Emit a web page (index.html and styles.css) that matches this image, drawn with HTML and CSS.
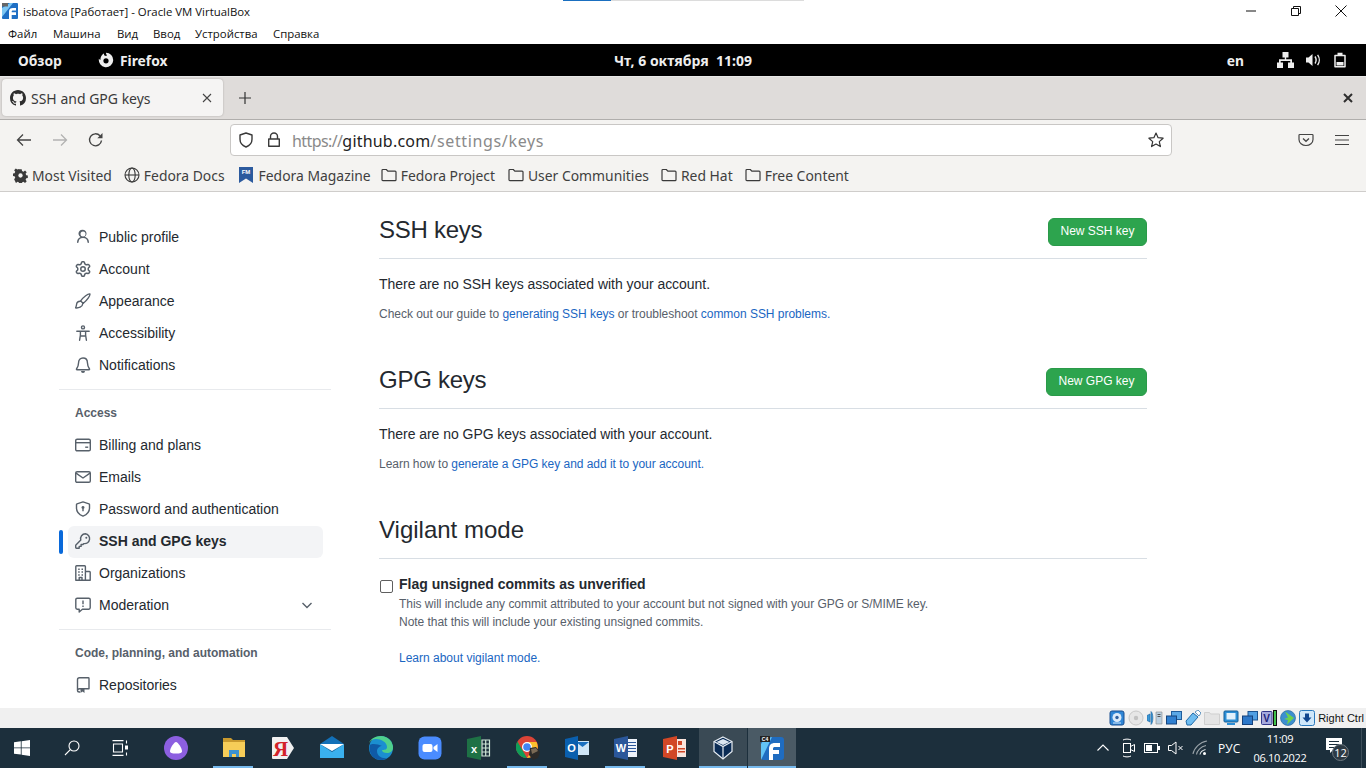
FILE: index.html
```html
<!DOCTYPE html>
<html lang="en">
<head>
<meta charset="utf-8">
<title>SSH and GPG keys</title>
<link rel="stylesheet" href="styles.css">
</head>
<body>
<svg class="defs" width="0" height="0" aria-hidden="true">
  <symbol id="i-gh" viewBox="0 0 16 16"><path fill="currentColor" d="M8 0c4.42 0 8 3.58 8 8a8.013 8.013 0 0 1-5.45 7.59c-.4.08-.55-.17-.55-.38 0-.27.01-1.13.01-2.2 0-.75-.25-1.23-.54-1.48 1.78-.2 3.65-.88 3.65-3.95 0-.88-.31-1.59-.82-2.15.08-.2.36-1.02-.08-2.12 0 0-.67-.22-2.2.82-.64-.18-1.32-.27-2-.27-.68 0-1.36.09-2 .27-1.53-1.03-2.2-.82-2.2-.82-.44 1.1-.16 1.92-.08 2.12-.51.56-.82 1.28-.82 2.15 0 3.06 1.86 3.75 3.64 3.95-.23.2-.44.55-.51 1.07-.46.21-1.61.55-2.33-.66-.15-.24-.6-.83-1.23-.82-.67.01-.27.38.01.53.34.19.73.9.82 1.13.16.45.68 1.31 2.69.94 0 .67.01 1.3.01 1.49 0 .21-.15.45-.55.38A7.995 7.995 0 0 1 0 8c0-4.42 3.58-8 8-8Z"/></symbol>
  <symbol id="i-person" viewBox="0 0 16 16"><path fill="currentColor" d="M10.561 8.073a6.005 6.005 0 0 1 3.432 5.142.75.75 0 1 1-1.498.07 4.5 4.5 0 0 0-8.99 0 .75.75 0 0 1-1.498-.07 6.004 6.004 0 0 1 3.431-5.142 3.999 3.999 0 1 1 4.123 0ZM10.5 5a2.5 2.5 0 1 0-5 0 2.5 2.5 0 0 0 5 0Z"/></symbol>
  <symbol id="i-gear" viewBox="0 0 16 16"><path fill="currentColor" d="M8 0a8.2 8.2 0 0 1 .701.031C9.444.095 9.99.645 10.16 1.29l.288 1.107c.018.066.079.158.212.224.231.114.454.243.668.386.123.082.233.09.299.071l1.103-.303c.644-.176 1.392.021 1.82.63.27.385.506.792.704 1.218.315.675.111 1.422-.364 1.891l-.814.806c-.049.048-.098.147-.088.294.016.257.016.515 0 .772-.01.147.038.246.088.294l.814.806c.475.469.679 1.216.364 1.891a7.977 7.977 0 0 1-.704 1.217c-.428.61-1.176.807-1.82.63l-1.102-.302c-.067-.019-.177-.011-.3.071a5.909 5.909 0 0 1-.668.386c-.133.066-.194.158-.211.224l-.29 1.106c-.168.646-.715 1.196-1.458 1.26a8.006 8.006 0 0 1-1.402 0c-.743-.064-1.289-.614-1.458-1.26l-.289-1.106c-.018-.066-.079-.158-.212-.224a5.738 5.738 0 0 1-.668-.386c-.123-.082-.233-.09-.299-.071l-1.103.303c-.644.176-1.392-.021-1.82-.63a8.12 8.12 0 0 1-.704-1.218c-.315-.675-.111-1.422.363-1.891l.815-.806c.05-.048.098-.147.088-.294a6.214 6.214 0 0 1 0-.772c.01-.147-.038-.246-.088-.294l-.815-.806C.635 6.045.431 5.298.746 4.623a7.92 7.92 0 0 1 .704-1.217c.428-.61 1.176-.807 1.82-.63l1.102.302c.067.019.177.011.3-.071.214-.143.437-.272.668-.386.133-.066.194-.158.211-.224l.29-1.106C6.009.645 6.556.095 7.299.03 7.53.01 7.764 0 8 0Zm-.571 1.525c-.036.003-.108.036-.137.146l-.289 1.105c-.147.561-.549.967-.998 1.189-.173.086-.34.183-.5.29-.417.278-.97.423-1.529.27l-1.103-.303c-.109-.03-.175.016-.195.045-.22.312-.412.644-.573.99-.014.031-.021.11.059.19l.815.806c.411.406.562.957.53 1.456a4.709 4.709 0 0 0 0 .582c.032.499-.119 1.05-.53 1.456l-.815.806c-.081.08-.073.159-.059.19.162.346.353.677.573.989.02.03.085.076.195.046l1.102-.303c.56-.153 1.113-.008 1.53.27.161.107.328.204.501.29.447.222.85.629.997 1.189l.289 1.105c.029.109.101.143.137.146a6.6 6.6 0 0 0 1.142 0c.036-.003.108-.036.137-.146l.289-1.105c.147-.561.549-.967.998-1.189.173-.086.34-.183.5-.29.417-.278.97-.423 1.529-.27l1.103.303c.109.029.175-.016.195-.045.22-.313.411-.644.573-.99.014-.031.021-.11-.059-.19l-.815-.806c-.411-.406-.562-.957-.53-1.456a4.709 4.709 0 0 0 0-.582c-.032-.499.119-1.05.53-1.456l.815-.806c.081-.08.073-.159.059-.19a6.464 6.464 0 0 0-.573-.989c-.02-.03-.085-.076-.195-.046l-1.102.303c-.56.153-1.113.008-1.53-.27a4.44 4.44 0 0 0-.501-.29c-.447-.222-.85-.629-.997-1.189l-.289-1.105c-.029-.11-.101-.143-.137-.146a6.6 6.6 0 0 0-1.142 0ZM11 8a3 3 0 1 1-6 0 3 3 0 0 1 6 0ZM9.5 8a1.5 1.5 0 1 0-3.001.001A1.5 1.5 0 0 0 9.5 8Z"/></symbol>
  <symbol id="i-brush" viewBox="0 0 16 16"><g fill="none" stroke="currentColor" stroke-width="1.4" stroke-linejoin="round" stroke-linecap="round"><path d="M14.900.900c-1.600-.5-6.600 3-9.200 7l2.400 2.400c4-2.700 7.300-7.800 6.800-9.400Z"/><path d="M5.500 8.300C3 8.200 1.700 9.700 1.500 11.700c-.1 1-.4 2.200-1 3.200 2.900.3 7-.6 7.300-4.400"/></g></symbol>
  <symbol id="i-access" viewBox="0 0 16 16"><g fill="none" stroke="currentColor" stroke-width="1.4" stroke-linecap="round"><circle cx="8" cy="2.400" r="1.500"/><path d="M1.800 6.200h12.400M5.400 6.500v3.700l-.8 5M10.600 6.500v3.700l.8 5M5.200 11h5.600"/></g></symbol>
  <symbol id="i-bell" viewBox="0 0 16 16"><g fill="none" stroke="currentColor" stroke-width="1.4" stroke-linejoin="round"><path d="M8 1C5.300 1 3.600 3 3.600 5.600c0 3.200-1.100 4.900-2.100 6.400-.2.400 0 .7.400.7h12.200c.4 0 .6-.3.400-.7-1-1.500-2.100-3.200-2.100-6.400C12.400 3 10.700 1 8 1Z"/></g><path fill="currentColor" d="M6 14h4a2 2 0 0 1-4 0Z"/></symbol>
  <symbol id="i-card" viewBox="0 0 16 16"><g fill="none" stroke="currentColor" stroke-width="1.4"><rect x=".7" y="2.200" width="14.600" height="11.600" rx="1.400"/><path d="M.7 5.700h14.600"/></g><path fill="currentColor" d="M10.200 9.500h3v1.400h-3z"/></symbol>
  <symbol id="i-mail" viewBox="0 0 16 16"><g fill="none" stroke="currentColor" stroke-width="1.4" stroke-linejoin="round"><rect x=".7" y="2.700" width="14.600" height="10.600" rx="1.400"/><path d="M1 4.200 8 9l7-4.800"/></g></symbol>
  <symbol id="i-shield" viewBox="0 0 16 16"><path fill="none" stroke="currentColor" stroke-width="1.4" stroke-linejoin="round" d="M8 .9 2 2.800c-.3.100-.5.400-.5.700V7c0 4 2.600 6.700 6.500 8.100 3.900-1.400 6.500-4.100 6.500-8.100V3.500c0-.3-.2-.6-.5-.7Z"/><path fill="currentColor" d="M9.500 6.500a1.500 1.500 0 0 1-.8 1.300v2.400H7.300V7.800a1.500 1.500 0 1 1 2.200-1.300Z"/></symbol>
  <symbol id="i-key" viewBox="0 0 16 16"><g fill="none" stroke="currentColor" stroke-width="1.4" stroke-linejoin="round"><path d="M10.400.8a4.800 4.800 0 0 0-4.600 6.200L.9 11.900c-.1.100-.2.300-.2.500v2.200c0 .4.300.7.700.7h2.800v-1.900h1.900v-1.900h1.900l.9-.9A4.800 4.800 0 1 0 10.400.8Z"/></g><circle fill="currentColor" cx="11.300" cy="4.700" r="1"/></symbol>
  <symbol id="i-org" viewBox="0 0 16 16"><g fill="none" stroke="currentColor" stroke-width="1.400" stroke-linejoin="round"><path d="M.8 15.200V1.600c0-.5.300-.8.800-.8h8c.5 0 .8.300.8.800v13.600zM10.400 6.500h4c.5 0 .8.300.8.800v7.900h-4.800M4.200 15.200v-2.700h2.800v2.700"/></g><path fill="currentColor" d="M3.200 3.400h1.500v1.500H3.200zM6.500 3.400H8v1.500H6.500zM3.200 6.300h1.500v1.500H3.200zM6.500 6.300H8v1.500H6.500zM3.200 9.200h1.500v1.500H3.200zM6.500 9.200H8v1.500H6.500z"/></symbol>
  <symbol id="i-report" viewBox="0 0 16 16"><path fill="none" stroke="currentColor" stroke-width="1.4" stroke-linejoin="round" d="M2.200 1.200h11.600c.8 0 1.400.6 1.400 1.400v8.200c0 .8-.6 1.400-1.400 1.400H7.400l-3.200 2.800V12.200h-2c-.8 0-1.400-.6-1.400-1.400V2.600c0-.8.600-1.400 1.400-1.400Z"/><path fill="currentColor" d="M7.300 3.600h1.400v3.600H7.300zM7.300 8.400h1.400v1.500H7.300z"/></symbol>
  <symbol id="i-repo" viewBox="0 0 16 16"><path fill="none" stroke="currentColor" stroke-width="1.4" stroke-linejoin="round" d="M4.500 11.800H14V1.500c0-.4-.3-.7-.7-.7H4.500C3.300.8 2.500 1.700 2.500 2.800v10.400c0 1.100.8 1.800 1.900 1.800H5M2.800 12.500c.3-.4.900-.7 1.700-.7"/><path fill="currentColor" d="M5.500 11.800h4V16L7.500 14.600 5.500 16z"/></symbol>
  <symbol id="i-folder" viewBox="0 0 16 16"><path fill="none" stroke="currentColor" stroke-width="1.200" stroke-linejoin="round" d="M1 12.800V3.400c0-.5.400-.9.900-.9h3.400l1.500 1.600h7.300c.5 0 .9.400.9.900v7.800c0 .5-.4.900-.9.900H1.900c-.5 0-.9-.4-.9-.9Z"/></symbol>
</svg>

<div class="screen">
  <div class="loader"><span class="loader-done"></span></div>

  <header class="vm-title">
    <svg class="vm-logo" viewBox="0 0 16 16" width="16" height="16"><rect width="16" height="16" rx="1" fill="#1f6fc4"/><path fill="#7cc6f3" d="M0 5 8 0h3L0 14z"/><path fill="#fff" d="M7 16V8.500C7 6 8.500 5 11 5h3v2.600h-3c-.9 0-1.300.4-1.300 1.100v.6H14V12H9.700v4z"/><rect x="0" y="0" width="6" height="3.500" fill="#666"/></svg>
    <span class="vm-name">isbatova [Работает] - Oracle VM VirtualBox</span>
    <div class="win-btns">
      <svg viewBox="0 0 12 12" width="12" height="12"><path d="M1 6h10" stroke="#111" fill="none"/></svg>
      <svg viewBox="0 0 12 12" width="12" height="12"><path d="M1.500 3.500h7v7h-7zM3.500 3.500v-2h7v7h-2" stroke="#111" fill="none"/></svg>
      <svg viewBox="0 0 12 12" width="12" height="12"><path d="M.5.500l11 11M11.500.500l-11 11" stroke="#111" fill="none"/></svg>
    </div>
  </header>

  <nav class="vm-menu">
    <span class="m1">Файл</span><span class="m2">Машина</span><span class="m3">Вид</span><span class="m4">Ввод</span><span class="m5">Устройства</span><span class="m6">Справка</span>
  </nav>

  <div class="gnome">
    <span class="g-overview">Обзор</span>
    <svg class="g-ff" viewBox="0 0 16 16" width="16" height="16"><path fill="#eee" d="M8 .8a7.200 7.200 0 1 1-7.100 6c.4.600.9 1 1.500 1.200C2.300 5.300 3.700 2.600 6 1.300c-.3 1.100.1 2.100 1 2.700.5-.2 1-.3 1.600-.3a4.500 4.500 0 0 1 3.900 2.500c-.8-.7-2-1-3-.8C9.400 4 7.400 1.300 8 .8Z"/><circle cx="8" cy="8.800" r="2.600" fill="#000"/></svg>
    <span class="g-app">Firefox</span>
    <span class="g-clock">Чт, 6 октября&nbsp; 11:09</span>
    <span class="g-lang">en</span>
    <svg class="g-net" viewBox="0 0 17 16" width="17" height="16"><path fill="#eee" d="M5.500 0h6v5.500H9.200V7.300H15V10.500h2V16h-6v-5.500h2.300V9H3.700v1.500H6V16H0v-5.500h2V7.300h5.800V5.500H5.500z"/></svg>
    <svg class="g-vol" viewBox="0 0 16 16" width="16" height="16"><path fill="#eee" d="M1 5.500h2.500L7.500 2v12L3.500 10.500H1z"/><path fill="none" stroke="#eee" stroke-width="1.400" d="M10 4.500c1.300 2 1.300 5 0 7M12.600 2.800c2.200 3 2.200 7.400 0 10.400"/></svg>
    <svg class="g-bat" viewBox="0 0 14 16" width="14" height="16"><path fill="none" stroke="#eee" stroke-width="1.500" stroke-linejoin="round" d="M2 3.500h10v11.300H2z"/><path fill="#eee" d="M4.500.800h5v2.400h-5zM3.500 10h7v3.500h-7z"/></svg>
  </div>

  <div class="ff-tabs">
    <div class="tab">
      <svg class="tab-ico" width="16" height="16"><use href="#i-gh"/></svg>
      <span class="tab-text">SSH and GPG keys</span>
      <svg class="tab-x" viewBox="0 0 10 10" width="10" height="10"><path d="M1 1l8 8M9 1l-8 8" stroke="#444" stroke-width="1.100"/></svg>
    </div>
    <svg class="tab-new" viewBox="0 0 12 12" width="12" height="12"><path d="M6 0v12M0 6h12" stroke="#333" stroke-width="1.200"/></svg>
    <svg class="win-x" viewBox="0 0 10 10" width="10" height="10"><path d="M1 1l8 8M9 1l-8 8" stroke="#2e2e2e" stroke-width="2"/></svg>
  </div>

  <div class="ff-bar">
    <svg class="back" viewBox="0 0 16 16" width="16" height="16"><path d="M15 8H1.500M7 2.500 1.500 8 7 13.500" fill="none" stroke="#444" stroke-width="1.300"/></svg>
    <svg class="fwd" viewBox="0 0 16 16" width="16" height="16"><path d="M1 8h13.500M9 2.500 14.500 8 9 13.500" fill="none" stroke="#b2b2b2" stroke-width="1.300"/></svg>
    <svg class="reload" viewBox="0 0 16 16" width="16" height="16"><path d="M13.500 8.500A6 6 0 1 1 12 3.800" fill="none" stroke="#444" stroke-width="1.400"/><path d="M14.500 1v5.200H9.300z" fill="#444"/></svg>
    <div class="url">
      <svg class="u-shield" viewBox="0 0 16 16" width="16" height="16"><path d="M8 1 2 3v4.200C2 11 4.500 13.600 8 15c3.500-1.400 6-4 6-7.800V3z" fill="none" stroke="#3a3a3a" stroke-width="1.400" stroke-linejoin="round"/></svg>
      <svg class="u-lock" viewBox="0 0 14 16" width="14" height="16"><path d="M3.500 7V4.500a3.500 3.500 0 0 1 7 0V7M1.700 7h10.600v7.300H1.700z" fill="none" stroke="#3a3a3a" stroke-width="1.400" stroke-linejoin="round"/></svg>
      <span class="u-text"><span class="u-proto">https://</span><b>github.com</b><span class="u-path">/settings/keys</span></span>
      <svg class="u-star" viewBox="0 0 16 16" width="16" height="16"><path d="M8 1l2.100 4.700 5 .5-3.800 3.400 1.100 5L8 12l-4.400 2.600 1.100-5L.9 6.200l5-.5z" fill="none" stroke="#333" stroke-width="1.200" stroke-linejoin="round"/></svg>
    </div>
    <svg class="pocket" viewBox="0 0 16 16" width="16" height="16"><path d="M1.800 2.500h12.400c.5 0 .8.300.8.800v4.200c0 3.400-3.100 6-7 6s-7-2.600-7-6V3.300c0-.5.300-.8.800-.8Z" fill="none" stroke="#444" stroke-width="1.200"/><path d="M5 6.500l3 2.800 3-2.800" fill="none" stroke="#444" stroke-width="1.300"/></svg>
    <svg class="burger" viewBox="0 0 14 12" width="14" height="12"><path d="M0 1.500h14M0 6h14M0 10.500h14" stroke="#444" stroke-width="1.200"/></svg>
  </div>

  <div class="ff-marks">
    <span class="mark"><svg viewBox="0 0 16 16" width="15" height="15"><g fill="#3a3a3a"><path d="M6.500 0h3l.4 2.400 1.800.8 2-1.400 2.100 2.100-1.400 2 .8 1.800 2.400.4h-.4v3l-2 .3-.8 1.800 1.400 2-2.100 2.100-2-1.400-1.800.8-.4 2.400h-3l-.4-2.400-1.800-.8-2 1.400L0 12.700l1.400-2-.8-1.800L-1.800 8.500v-3l2.400-.4.8-1.800L0 1.300 2.100-.8l2 1.400 2-.8z" transform="translate(1.200 1.200) scale(.85)"/></g><circle cx="8" cy="8" r="2.300" fill="#f4f3f1"/></svg>Most Visited</span>
    <span class="mark"><svg viewBox="0 0 16 16" width="16" height="16"><g fill="none" stroke="#3a3a3a" stroke-width="1.100"><circle cx="8" cy="8" r="7"/><ellipse cx="8" cy="8" rx="3.200" ry="7"/><path d="M1 8h14"/></g></svg>Fedora Docs</span>
    <span class="mark mark-fm"><svg viewBox="0 0 14 16" width="14" height="16"><path fill="#2c5a9e" d="M0 0h14v16l-7-4.500L0 16z"/><text x="7" y="7" class="fm-t">FM</text></svg>Fedora Magazine</span>
    <span class="mark"><svg width="16" height="16"><use href="#i-folder"/></svg>Fedora Project</span>
    <span class="mark mark-uc"><svg width="16" height="16"><use href="#i-folder"/></svg>User Communities</span>
    <span class="mark"><svg width="16" height="16"><use href="#i-folder"/></svg>Red Hat</span>
    <span class="mark"><svg width="16" height="16"><use href="#i-folder"/></svg>Free Content</span>
  </div>

  <div class="page">
    <aside class="side">
      <a class="item"><svg width="16" height="16"><use href="#i-person"/></svg>Public profile</a>
      <a class="item"><svg width="16" height="16"><use href="#i-gear"/></svg>Account</a>
      <a class="item"><svg width="16" height="16"><use href="#i-brush"/></svg>Appearance</a>
      <a class="item"><svg width="16" height="16"><use href="#i-access"/></svg>Accessibility</a>
      <a class="item"><svg width="16" height="16"><use href="#i-bell"/></svg>Notifications</a>
      <div class="side-rule"></div>
      <div class="side-head">Access</div>
      <a class="item"><svg width="16" height="16"><use href="#i-card"/></svg>Billing and plans</a>
      <a class="item"><svg width="16" height="16"><use href="#i-mail"/></svg>Emails</a>
      <a class="item"><svg width="16" height="16"><use href="#i-shield"/></svg>Password and authentication</a>
      <a class="item active"><svg width="16" height="16"><use href="#i-key"/></svg>SSH and GPG keys</a>
      <a class="item"><svg width="16" height="16"><use href="#i-org"/></svg>Organizations</a>
      <a class="item"><svg width="16" height="16"><use href="#i-report"/></svg>Moderation<svg class="chev" viewBox="0 0 12 12" width="12" height="12"><path d="M1.500 4 6 8.500 10.500 4" fill="none" stroke="#57606a" stroke-width="1.400"/></svg></a>
      <div class="side-rule"></div>
      <div class="side-head">Code, planning, and automation</div>
      <a class="item"><svg width="16" height="16"><use href="#i-repo"/></svg>Repositories</a>
    </aside>
    <main class="main">
      <section class="sec">
        <div class="sec-head"><h2 class="tight">SSH keys</h2><a class="btn btn-ssh">New SSH key</a></div>
        <p class="lead">There are no SSH keys associated with your account.</p>
        <p class="note">Check out our guide to <a>generating SSH keys</a> or troubleshoot <a>common SSH problems.</a></p>
      </section>
      <section class="sec">
        <div class="sec-head"><h2 class="tight">GPG keys</h2><a class="btn btn-gpg">New GPG key</a></div>
        <p class="lead">There are no GPG keys associated with your account.</p>
        <p class="note">Learn how to <a>generate a GPG key and add it to your account.</a></p>
      </section>
      <section class="sec">
        <div class="sec-head"><h2>Vigilant mode</h2></div>
        <div class="flag">
          <span class="check"></span>
          <div>
            <div class="flag-title">Flag unsigned commits as unverified</div>
            <div class="flag-note">This will include any commit attributed to your account but not signed with your GPG or S/MIME key.</div>
            <div class="flag-note">Note that this will include your existing unsigned commits.</div>
            <div class="flag-link"><a>Learn about vigilant mode.</a></div>
          </div>
        </div>
      </section>
    </main>
  </div>

  <div class="vm-status">
    <svg viewBox="0 0 16 16"><rect x="1" y="1" width="14" height="14" rx="2" fill="#2f86d6" stroke="#1a4f90"/><circle cx="8" cy="7.500" r="4.500" fill="#dcebfa"/><circle cx="8" cy="7.500" r="1.700" fill="#2f5f9e"/><path d="M4 13h8" stroke="#dcebfa"/></svg>
    <svg viewBox="0 0 16 16"><circle cx="8" cy="8" r="7" fill="#e6e6e6" stroke="#c8c8c8"/><circle cx="8" cy="8" r="2.200" fill="#c2c2c2"/></svg>
    <svg viewBox="0 0 16 16"><path d="M0 5.500l3-1.500v8l-3-1.500zM4 1.500c2.500 1.500 2.500 11.500 0 13z" fill="#3d9ad9" stroke="#1a5f9a" stroke-width=".6"/><path d="M9 2h6v12H9z" fill="#bcd0e0" stroke="#8a8a8a" stroke-width=".6"/><path d="M10.500 4.500h3M10.500 6.500h3" stroke="#555"/></svg>
    <svg viewBox="0 0 16 16"><rect x="5.500" y="1.500" width="10" height="8" fill="#5ba8e6" stroke="#1f5d9c"/><rect x=".5" y="6" width="10" height="8" fill="#2f7fd0" stroke="#17457d"/></svg>
    <svg viewBox="0 0 16 16"><path d="M1 11l7-8 5 4-7 8H2z" fill="#6ebcf0" stroke="#1f6aa8"/><path d="M10 2l3-2 3 3-2 3z" fill="#fff" stroke="#1f6aa8" stroke-width=".7"/></svg>
    <svg viewBox="0 0 16 16"><path d="M.5 2.500h5l1 1.500h9v10.500H.5z" fill="#e4e4e4" stroke="#cfcfcf"/></svg>
    <svg viewBox="0 0 16 16"><rect x="1" y="1" width="14" height="11" rx="1" fill="#2c8fd6" stroke="#175f97"/><rect x="3.500" y="3" width="9" height="6.500" fill="#e2f1fc"/><rect x="4" y="13" width="8" height="2" fill="#2c8fd6"/></svg>
    <svg viewBox="0 0 16 16"><rect x="6" y="1.500" width="9.500" height="8.500" fill="#4f9fe3" stroke="#1a5391"/><rect x=".5" y="6" width="10" height="8.500" fill="#2d78c9" stroke="#15417b"/></svg>
    <svg viewBox="0 0 16 16"><rect x=".5" y="1.500" width="10.500" height="13" rx="1" fill="#a5a9dd" stroke="#33388c"/><text x="5.700" y="11.500" class="v-t">V</text><rect x="12.500" y=".5" width="3" height="15" fill="#3fc24b" stroke="#111"/></svg>
    <svg viewBox="0 0 16 16"><circle cx="8" cy="8" r="7.500" fill="#3d8fcf" stroke="#1d5f97" stroke-width=".6"/><path d="M5 1.500l9 6.500-7 6.500 1-4.500-4-1 4-1.500z" fill="#6dd14e"/></svg>
    <svg viewBox="0 0 16 16"><rect x=".5" y=".5" width="15" height="15" rx="2" fill="#cfe7fa" stroke="#2a79bd"/><path d="M6 3.500h4v4h2.500L8 12.500l-4.500-5H6z" fill="#10468f"/></svg>
    <span class="rctrl">Right Ctrl</span>
  </div>

  <footer class="taskbar">
    <div class="tb-slot tb-win"><svg viewBox="0 0 16 16" width="16" height="16"><path fill="#fff" d="M0 2.300 6.800 1.300v6.200H0zM7.600 1.200 16 0v7.500H7.600zM0 8.300h6.800v6.300L0 13.700zM7.600 8.300H16V16l-8.400-1.200z"/></svg></div>
    <div class="tb-slot"><svg viewBox="0 0 16 16" width="16" height="16"><g fill="none" stroke="#fff" stroke-width="1.100"><circle cx="10" cy="6" r="5"/><path d="M6.300 9.700 1 15"/></g></svg></div>
    <div class="tb-slot"><svg viewBox="0 0 16 16" width="17" height="16"><g fill="none" stroke="#fff" stroke-width="1.100"><path d="M0 .6h11M0 15.400h11M1 4h9v8H1z"/><path d="M14 .5v3M14 12.500v3"/></g><rect x="12.500" y="5.500" width="3" height="4" fill="#fff"/></svg></div>
    <div class="tb-slot tb-alice"><svg viewBox="0 0 24 24" width="24" height="24"><circle cx="12" cy="12" r="12" fill="#8c5fe0"/><path fill="#fff" d="M12 6c2 0 6 6.500 6 9 0 2-1.800 2.500-6 2.500S6 17 6 15c0-2.500 4-9 6-9Z"/></svg></div>

    <div class="tb-app on"><svg viewBox="0 0 24 24" width="24" height="24"><path fill="#c99a2e" d="M1 2h8l2 2h12v3H1z"/><path fill="#f6cd58" d="M1 6h22v15H1z"/><path fill="#3d92cf" d="M7 14h10v7h-3v-3h-4v3H7z"/></svg></div>
    <div class="tb-app"><svg viewBox="0 0 24 24" width="24" height="24"><path fill="#f1f1f1" d="M2 1h14l7 11-7 11H2a1 1 0 0 1-1-1V2a1 1 0 0 1 1-1Z"/><text x="9.500" y="20" class="ya">Я</text></svg></div>
    <div class="tb-app"><svg viewBox="0 0 24 24" width="24" height="24"><path fill="#1270b8" d="M0 8 12 0l12 8-12 8z"/><path fill="#3ab0ee" d="M0 8v14h24V8l-12 8z"/><path fill="#fff" d="M0 8h24l-12 7z"/></svg></div>
    <div class="tb-app"><svg viewBox="0 0 24 24" width="24" height="24"><circle cx="12" cy="12" r="12" fill="#1b8fd0"/><path fill="#4fd08c" d="M12 0a12 12 0 0 1 12 12c0 3-3 5-6 5s-5-1-5-3c2 0 5 0 5-3 0-5-6-8-11-8-3 0-6 2-7 4C1.500 3 6 0 12 0Z"/><path fill="#0f5aa6" d="M1 9c-2 6 2 15 11 15 2 0 4-.5 6-2-5 1-10-2-10-7 0-3 3-5 5-5-4-2-10-3-12-1Z"/></svg></div>
    <div class="tb-app"><svg viewBox="0 0 24 24" width="24" height="24"><rect width="23" height="23" x=".5" y=".5" rx="6" fill="#4a8cff"/><rect x="4.500" y="8" width="10" height="8" rx="2" fill="#fff"/><path fill="#fff" d="M15.500 11l4-3v8l-4-3z"/></svg></div>
    <div class="tb-app"><svg viewBox="0 0 24 24" width="24" height="24"><path fill="#1e7145" d="M0 3l14-3v24L0 21z"/><path fill="none" stroke="#cfe7d8" stroke-width="1.200" d="M15 4h7.500v16H15zM15 8h7.500M15 12h7.500M15 16h7.500M18.700 4v16"/><text x="7" y="16.500" class="o-l">x</text></svg></div>
    <div class="tb-app on"><svg viewBox="0 0 24 24" width="24" height="24"><circle cx="11" cy="11" r="11" fill="#db4437"/><path fill="#0f9d58" d="M11 22A11 11 0 0 1 1.400 5.500l5.500 9.500z"/><path fill="#fbc02d" d="M11 6h9.500A11 11 0 0 1 11 22l5-8z"/><circle cx="11" cy="11" r="5" fill="#fff"/><circle cx="11" cy="11" r="3.800" fill="#4285f4"/><path fill="#2b2a28" d="M14 12l6-1 4 5-2 6-5 2-4-5z"/><path fill="#7a6a55" d="M15 13l5-1 2 3-6 3z"/></svg></div>
    <div class="tb-app"><svg viewBox="0 0 24 24" width="24" height="24"><rect x="11" y="5" width="13" height="14" fill="#cfe6f7"/><path fill="#1a70c0" d="M11 6l6.500 5L24 6z"/><path fill="#0a5fae" d="M0 3l13-3v24L0 21z"/><text x="6.500" y="16" class="o-l">O</text></svg></div>
    <div class="tb-app on"><svg viewBox="0 0 24 24" width="24" height="24"><path fill="#2b579a" d="M0 3l14-3v24L0 21z"/><rect x="14" y="3" width="9" height="18" fill="#eef3fa"/><path stroke="#2b579a" d="M14 6.500h8M14 9.500h8M14 12.500h8M14 15.500h8"/><text x="7" y="16" class="o-l">W</text></svg></div>
    <div class="tb-app"><svg viewBox="0 0 24 24" width="24" height="24"><path fill="#d24726" d="M0 3l14-3v24L0 21z"/><rect x="14" y="3" width="9" height="18" fill="#fbe5dd"/><path fill="#d24726" d="M15 5h4v4h-4zM15 12h7v1.500h-7zM15 15h7v1.500h-7z"/><text x="7" y="16.500" class="o-l">P</text></svg></div>
    <div class="tb-app run on"><svg viewBox="0 0 24 24" width="24" height="24"><path fill="#0b2c55" stroke="#e8eef4" stroke-width="1.200" d="M12 1l9 4.500v10L12 23l-9-7.500v-10z"/><path fill="#dbe6f0" d="M12 3l6.500 3L12 9 5.500 6z"/><path fill="none" stroke="#e8eef4" stroke-width="1.200" d="M3 5.500l9 5 9-5M12 10.500V23"/></svg></div>
    <div class="tb-app run cur on"><svg viewBox="0 0 24 24" width="24" height="24"><rect x="1" y="1" width="23" height="23" rx="3" fill="#1f6cc0"/><path fill="#62c3f5" d="M1 8C3 4 7 2 12 1L1 24z"/><path fill="#fff" d="M9 24V13c0-4 2-6 6-6h5v4h-5c-1.500 0-2 .5-2 2v1h6v4h-6v6z"/><rect y="0" width="10" height="6" fill="#222"/><text x="5" y="5" class="c4">C4</text></svg></div>

    <div class="tray">
      <svg class="t-chev" viewBox="0 0 12 12" width="12" height="12"><path d="M.5 8.500 6 3l5.500 5.500" fill="none" stroke="#fff" stroke-width="1.100"/></svg>
      <svg class="t-cam" viewBox="0 0 16 20" width="16" height="20"><g fill="none" stroke="#fff"><rect x="3.500" y="5.500" width="7" height="9"/><path d="M10.500 8.500l4-2v7l-4-2M3 2c2-1.200 6-1.200 8 0M3 18c2 1.200 6 1.200 8 0"/></g></svg>
      <svg viewBox="0 0 16 12" width="16" height="12"><rect x=".5" y="1.500" width="13" height="9" fill="none" stroke="#fff"/><rect x="2" y="3" width="6" height="6" fill="#fff"/><rect x="14" y="4" width="2" height="4" fill="#fff"/></svg>
      <svg viewBox="0 0 16 14" width="16" height="14"><path d="M.5 4.500h3L8 1v12L3.500 9.500h-3z" fill="none" stroke="#fff"/><path d="M10.500 5l4 4M14.500 5l-4 4" stroke="#fff"/></svg>
      <svg class="t-wifi" viewBox="0 0 16 16" width="16" height="16"><g fill="none" stroke="#9aa3a9" stroke-width="1.100"><path d="M1 14C2 8 8 2 15 1M4.500 14.500C5 11 8.500 6.500 14 5.500"/></g><g fill="none" stroke="#dfe3e6" stroke-width="1.100"><path d="M8 14.500c.3-2 2-4 5.500-5"/></g><circle cx="12.500" cy="13.500" r="1.500" fill="#fff"/></svg>
      <span class="t-lang">РУС</span>
      <div class="t-clock"><div>11:09</div><div>06.10.2022</div></div>
      <div class="t-notif">
        <svg viewBox="0 0 16 16" width="16" height="16"><path fill="#fff" d="M0 0h16v12H7l-3 3v-3H0z"/><path stroke="#1b2f3c" d="M3 3.500h10M3 6.500h10M3 9.500h7"/></svg>
        <span class="badge">12</span>
      </div>
    </div>
  </footer>
</div>
</body>
</html>
```

FILE: styles.css
```css
* { box-sizing: border-box; }
html, body { margin: 0; padding: 0; }
body { width: 1366px; height: 768px; overflow: hidden; background: #fff; }
.defs { display: block; height: 0; }
svg { flex: none; display: block; }
.screen { position: relative; width: 1366px; height: 768px; display: flex; flex-direction: column; overflow: hidden; }

.loader { position: absolute; left: 563px; top: 0; width: 241px; height: 1px; background: #dcdcdc; }
.loader-done { display: block; width: 48px; height: 1px; background: #1a6fc0; }

.vm-title { height: 22px; display: flex; align-items: center; padding-left: 2px; background: #fff; font: 11.4px "Open Sans", sans-serif; color: #111; }
.vm-logo { margin-right: 5px; }
.win-btns { margin-left: auto; display: flex; gap: 33px; padding-right: 19px; align-items: center; }
.vm-menu { height: 22px; display: flex; align-items: center; padding-left: 8px; font: 11.4px "Open Sans", sans-serif; color: #111; background: #fff; }
.vm-menu span { display: block; }
.m1 { width: 45px; } .m2 { width: 64px; } .m3 { width: 36px; } .m4 { width: 42px; } .m5 { width: 78px; }

.gnome { height: 33px; background: #000; display: flex; align-items: center; color: #eee; font: 700 13.8px "Noto Sans", sans-serif; position: relative; border-bottom: 1px solid #e8e8e8; }
.g-overview { margin-left: 18px; width: 80px; }
.g-ff { margin-right: 6px; }
.g-clock { position: absolute; left: 0; right: 0; text-align: center; font-size: 14px; }
.g-lang { margin-left: auto; margin-right: 33px; }
.g-net { margin-right: 11px; }
.g-vol { margin-right: 12px; }
.g-bat { margin-right: 19px; }

.ff-tabs { height: 43px; background: #dfdcda; display: flex; align-items: center; padding-left: 2px; border-bottom: 1px solid #b0aeac; position: relative; }
.tab { width: 221px; height: 37px; margin-bottom: 1px; background: #f5f4f3; border-radius: 4px; box-shadow: 0 0 2px rgba(0,0,0,.25); display: flex; align-items: center; padding-left: 8px; color: #3a3a3a; font: 14px "Noto Sans", sans-serif; }
.tab-ico { color: #2e2e2e; margin-right: 5px; }
.tab-text { padding-top: 2px; }
.tab-x { margin-left: auto; margin-right: 11px; }
.tab-new { margin-left: 16px; }
.win-x { margin-left: auto; margin-right: 13px; }

.ff-bar { height: 39px; padding-top: 1px; background: #f4f3f1; display: flex; align-items: center; }
.back { margin-left: 16px; }
.fwd { margin-left: 20px; }
.reload { margin-left: 20px; }
.url { width: 942px; height: 32px; margin-left: 126px; background: #fff; border: 1px solid #c9c7c5; border-radius: 4px; display: flex; align-items: center; padding-left: 7px; font: 16px "Noto Sans", sans-serif; color: #8a8a8a; }
.u-lock { margin-left: 13px; }
.u-text { margin-left: 11px; padding-top: 1px; }
.u-proto { letter-spacing: -.6px; }
.u-text b { font-weight: 400; color: #222; letter-spacing: .2px; }
.u-path { letter-spacing: .65px; }
.u-star { margin-left: auto; margin-right: 7px; }
.pocket { margin-left: 126px; }
.burger { margin-left: 21px; }

.ff-marks { height: 33px; background: #f4f3f1; border-bottom: 1px solid #cfcdcb; display: flex; align-items: center; padding-left: 13px; gap: 12px; font: 13.9px "Noto Sans", sans-serif; color: #3f3f3f; }
.mark { display: flex; align-items: center; gap: 4px; color: #3f3f3f; }
.mark svg { color: #3a3a3a; }
.mark-fm { gap: 6px; margin-left: 2px; margin-right: -2px; }
.mark-uc { margin-left: 1px; }
.fm-t { font: 700 6px "Liberation Sans", sans-serif; fill: #fff; text-anchor: middle; }

.page { height: 516px; display: flex; overflow: hidden; background: #fff; padding-left: 59px; font-family: "Liberation Sans", sans-serif; }
.side { width: 272px; padding-top: 30px; flex: none; }
.item { height: 32px; margin-left: 9px; width: 255px; padding: 0 0 2px 7px; display: flex; align-items: center; gap: 8px; font-size: 14px; color: #24292f; border-radius: 6px; position: relative; text-decoration: none; }
.item svg { color: #57606a; }
.active { background: #f3f4f6; font-weight: 700; }
.active::before { content: ""; position: absolute; left: -9px; top: 4px; width: 4px; height: 24px; border-radius: 4px; background: #0969da; }
.chev { margin-left: auto; margin-right: 10px; }
.side-rule { height: 1px; background: #e8eaed; margin: 7px 0 0; }
.side-head { height: 40px; padding: 16px 0 0 16px; font-size: 12px; font-weight: 700; color: #57606a; line-height: 15px; }

.main { width: 768px; margin-left: 48px; padding-top: 26px; flex: none; }
.sec { height: 150px; }
.sec-head { height: 41px; border-bottom: 1px solid #d8dee4; display: flex; justify-content: space-between; align-items: flex-start; }
h2 { margin: 0; font-size: 24px; font-weight: 400; line-height: 24px; color: #24292f; }
h2.tight { letter-spacing: -.25px; }
.btn { height: 28px; border-radius: 6px; background: #2da44e; border: 1px solid #2a9a49; color: #fff; font-size: 12px; line-height: 24px; text-align: center; text-decoration: none; }
.btn-ssh { width: 99px; }
.btn-gpg { width: 101px; }
.lead { margin: 15px 0 0; font-size: 14px; line-height: 21px; color: #24292f; letter-spacing: -.04px; }
.note { margin: 10px 0 0; font-size: 12px; line-height: 18px; color: #57606a; letter-spacing: -.03px; }
.note a, .flag-link a { color: #1a66c2; }

.flag { display: flex; margin-top: 15px; }
.check { width: 13px; height: 13px; margin: 6px 6px 0 1px; border: 1.5px solid #5f5f5f; border-radius: 2px; background: #fff; flex: none; }
.flag-title { font-size: 14px; font-weight: 700; line-height: 21px; color: #24292f; }
.flag-note { font-size: 12px; line-height: 18px; color: #57606a; letter-spacing: -.03px; }
.flag-link { font-size: 12px; line-height: 18px; margin-top: 18px; }

.vm-status { height: 20px; background: #f0f0f0; display: flex; align-items: center; justify-content: flex-end; gap: 3px; padding-right: 2px; }
.vm-status svg { width: 16px; height: 16px; }
.rctrl { font: 11px "Liberation Sans", sans-serif; color: #111; margin-left: 0; }
.v-t { font: 700 10px "Liberation Sans", sans-serif; fill: #1b1f7a; text-anchor: middle; }

.taskbar { height: 40px; background: #1c2f3c; display: flex; align-items: stretch; color: #fff; padding-right: 4px; }
.tb-slot { width: 48px; display: flex; align-items: center; justify-content: center; }
.tb-win { width: 44px; margin-right: 4px; }
.tb-alice { margin-left: 8px; margin-right: 9px; }
.tb-app { width: 49px; display: flex; align-items: center; justify-content: center; position: relative; }
.tb-app.on::after { content: ""; position: absolute; left: 4px; right: 5px; bottom: 0; height: 2px; background: #76b9ed; }
.tb-app.run { background: #3a4a55; border-right: 1px solid #1c2f3c; }
.tb-app.cur { background: #4a5a65; }
.tb-app.run.on::after { left: 0; right: 0; }
.ya { font: 700 21px "Liberation Serif", serif; fill: #d3232a; text-anchor: middle; }
.o-l { font: 700 11px "Liberation Sans", sans-serif; fill: #fff; text-anchor: middle; }
.c4 { font: 700 5px "Liberation Sans", sans-serif; fill: #fff; text-anchor: middle; }

.tray { margin-left: auto; display: flex; align-items: center; font: 12px "Open Sans", sans-serif; color: #fff; padding-right: 11px; border-right: 1px solid #3d4e5a; }
.tray > svg { margin-right: 8px; }
.tray > .t-chev { margin-right: 11px; }
.t-lang { margin-left: 2px; width: 32px; }
.t-clock { width: 60px; text-align: center; line-height: 19px; margin-right: 16px; font-size: 11px; letter-spacing: -.3px; }
.t-notif { position: relative; width: 24px; height: 30px; display: flex; justify-content: flex-start; padding-top: 5px; }
.badge { position: absolute; left: 6px; top: 11px; width: 17px; height: 17px; border-radius: 50%; background: #2d3a44; border: 1px solid #6d7880; font-size: 11px; line-height: 15px; text-align: center; }
```
